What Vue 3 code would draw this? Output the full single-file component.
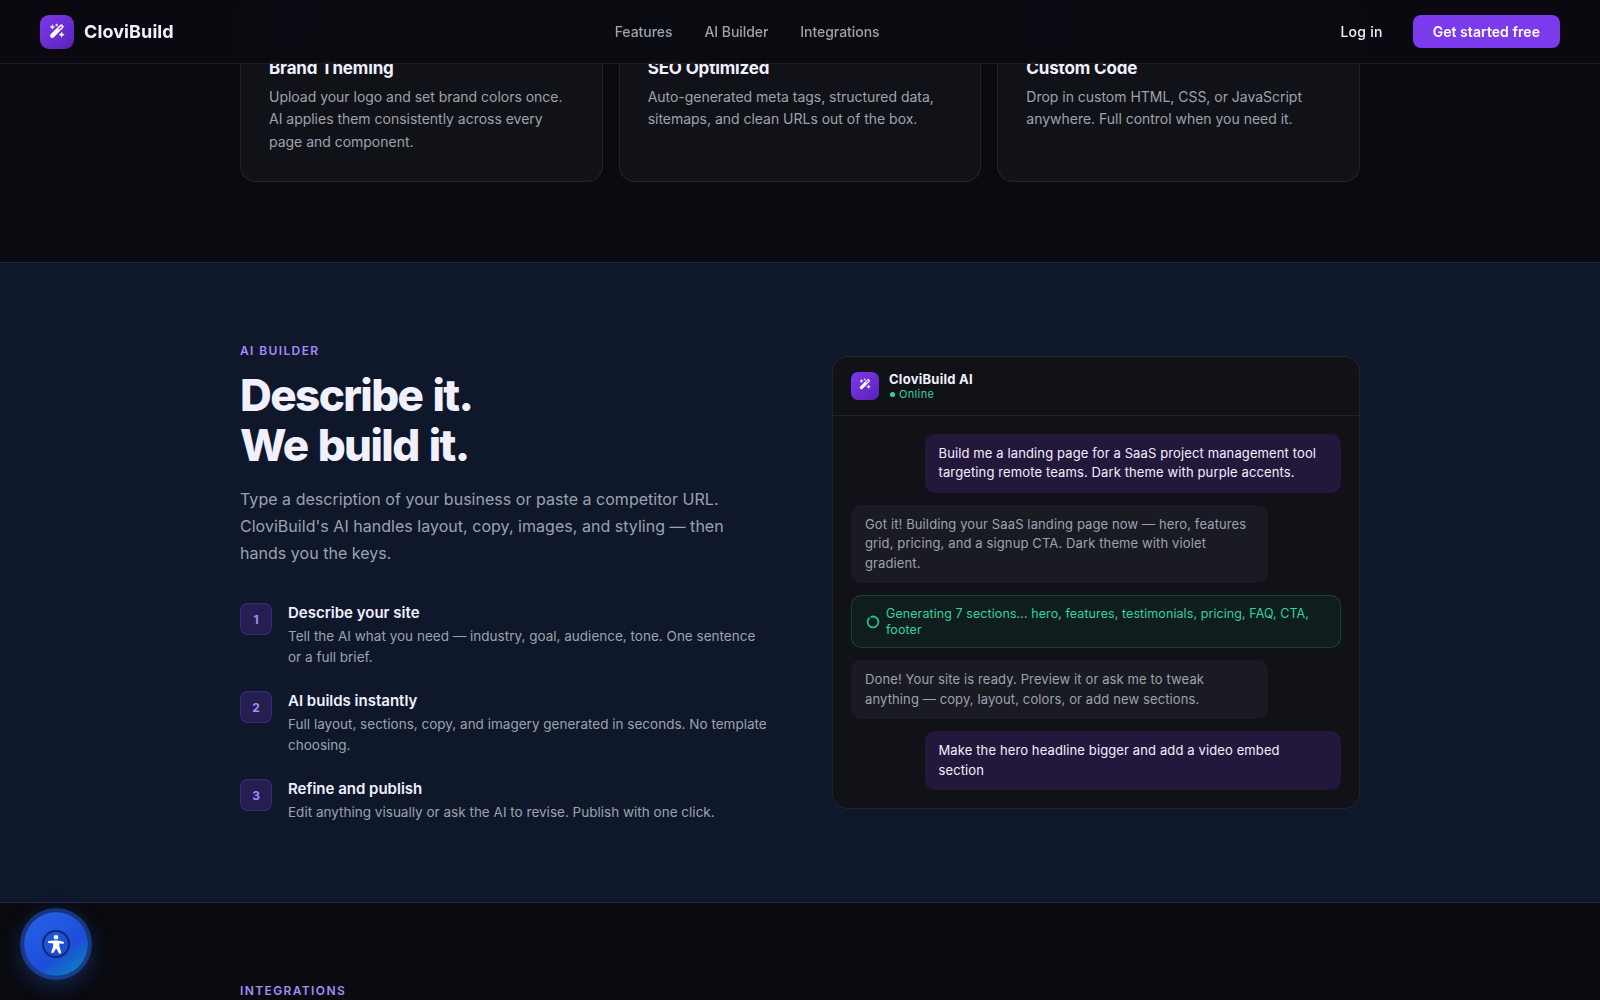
<template>
  <div class="page">
    <nav class="navbar">
      <a class="brand" href="#">
        <span class="brand-icon">
          <svg viewBox="0 0 24 24"><path :d="wandPath" /></svg>
        </span>
        <span class="brand-name">CloviBuild</span>
      </a>
      <div class="nav-links">
        <a v-for="link in links" :key="link" href="#">{{ link }}</a>
      </div>
      <div class="nav-actions">
        <a class="login" href="#">Log in</a>
        <a class="cta" href="#">Get started free</a>
      </div>
    </nav>

    <section class="features">
      <div v-for="feature in features" :key="feature.title" class="feature-card">
        <div class="feature-icon" :class="feature.tone"></div>
        <h3>{{ feature.title }}</h3>
        <p>{{ feature.text }}</p>
      </div>
    </section>

    <section class="builder">
      <div class="builder-inner">
        <div class="builder-copy">
          <div class="label">AI BUILDER</div>
          <h2>Describe it.<br />We build it.</h2>
          <p class="lead">
            Type a description of your business or paste a competitor URL. CloviBuild's AI handles layout, copy, images, and styling — then hands you the keys.
          </p>
          <div class="steps">
            <div v-for="(step, index) in steps" :key="step.title" class="step">
              <div class="step-number">{{ index + 1 }}</div>
              <div class="step-body">
                <div class="step-title">{{ step.title }}</div>
                <div class="step-text">{{ step.text }}</div>
              </div>
            </div>
          </div>
        </div>

        <div class="chat">
          <div class="chat-header">
            <span class="chat-avatar">
              <svg viewBox="0 0 24 24"><path :d="wandPath" /></svg>
            </span>
            <div>
              <div class="chat-name">CloviBuild AI</div>
              <div class="chat-online"><i class="dot"></i>Online</div>
            </div>
          </div>
          <div class="chat-body">
            <div v-for="message in messages" :key="message.text" class="message" :class="message.from">
              <svg v-if="message.from === 'status'" class="spinner" viewBox="0 0 14 14">
                <path d="M3.6 2.8A5.4 5.4 0 1 0 4.6 2.15" />
              </svg>
              <span>{{ message.text }}</span>
            </div>
          </div>
        </div>
      </div>
    </section>

    <section class="integrations">
      <div class="label">INTEGRATIONS</div>
    </section>

    <button class="a11y" aria-label="Accessibility">
      <svg viewBox="0 0 28 28">
        <circle class="ring" cx="14" cy="14" r="13" />
        <circle cx="14" cy="7.2" r="2.3" />
        <path d="M6.6 10.9 12 10.6h4l5.4 1.1c1 .2.9 2.1-.2 2.1l-3.9-.3.2 3.2 1.6 5.4c.4 1.6-1.7 2.2-2.3.8L14.6 19h-.9l-1.9 3.3c-.8 1.5-2.9.6-2.4-.9l1.7-4.6.2-3.4-4.5-.5c-1.2-.1-1.2-2-.2-2z" />
      </svg>
    </button>
  </div>
</template>

<script setup>
const wandPath =
  'M20.7 3.3a3 3 0 0 0-4.3 0L2.7 17a3 3 0 0 0 4.3 4.3L20.7 7.6a3 3 0 0 0 0-4.3zM19.3 6.2l-4 4-1.5-1.5 4-4a1.06 1.06 0 0 1 1.5 1.5zM5 2.5l1 2.5 2.5 1L6 7 5 9.5 4 7 1.5 6 4 5zM11.5 1l.6 1.4 1.4.6-1.4.6-.6 1.4-.6-1.4L9.5 3l1.4-.6zM19 13.5l1.2 2.8L23 17.5l-2.8 1.2L19 21.5l-1.2-2.8-2.8-1.2 2.8-1.2z'

const links = ['Features', 'AI Builder', 'Integrations']

const features = [
  {
    title: 'Brand Theming',
    text: 'Upload your logo and set brand colors once. AI applies them consistently across every page and component.',
    tone: 'indigo'
  },
  {
    title: 'SEO Optimized',
    text: 'Auto-generated meta tags, structured data, sitemaps, and clean URLs out of the box.',
    tone: 'teal'
  },
  {
    title: 'Custom Code',
    text: 'Drop in custom HTML, CSS, or JavaScript anywhere. Full control when you need it.',
    tone: 'violet'
  }
]

const steps = [
  {
    title: 'Describe your site',
    text: 'Tell the AI what you need — industry, goal, audience, tone. One sentence or a full brief.'
  },
  {
    title: 'AI builds instantly',
    text: 'Full layout, sections, copy, and imagery generated in seconds. No template choosing.'
  },
  {
    title: 'Refine and publish',
    text: 'Edit anything visually or ask the AI to revise. Publish with one click.'
  }
]

const messages = [
  {
    from: 'user',
    text: 'Build me a landing page for a SaaS project management tool targeting remote teams. Dark theme with purple accents.'
  },
  {
    from: 'bot',
    text: 'Got it! Building your SaaS landing page now — hero, features grid, pricing, and a signup CTA. Dark theme with violet gradient.'
  },
  {
    from: 'status',
    text: 'Generating 7 sections... hero, features, testimonials, pricing, FAQ, CTA, footer'
  },
  {
    from: 'bot',
    text: 'Done! Your site is ready. Preview it or ask me to tweak anything — copy, layout, colors, or add new sections.'
  },
  {
    from: 'user',
    text: 'Make the hero headline bigger and add a video embed section'
  }
]
</script>

<style>
body {
  margin: 0;
  background: #0a0a0f;
}
</style>

<style scoped>
.page {
  height: 1000px;
  overflow: hidden;
  background: #0a0a0f;
  color: #f1f0ff;
  font-family: Inter, sans-serif;
}

a {
  color: inherit;
  text-decoration: none;
}

h2,
h3,
p {
  margin: 0;
}

.navbar {
  position: fixed;
  inset: 0 0 auto;
  z-index: 10;
  box-sizing: border-box;
  height: 64px;
  padding: 0 40px;
  display: flex;
  justify-content: space-between;
  align-items: center;
  background: rgba(10, 10, 15, 0.92);
  backdrop-filter: blur(12px);
  border-bottom: 1px solid rgba(255, 255, 255, 0.08);
}

.brand {
  display: flex;
  align-items: center;
  gap: 10px;
}

.brand-icon,
.chat-avatar {
  display: flex;
  align-items: center;
  justify-content: center;
  background: linear-gradient(135deg, #7c3aed, #5b21b6);
}

.brand-icon {
  width: 34px;
  height: 34px;
  border-radius: 9px;
}

.brand-icon svg,
.chat-avatar svg {
  fill: #fff;
  stroke: #fff;
  stroke-width: 0.6;
}

.brand-icon svg {
  width: 16px;
  height: 16px;
  margin-bottom: 2px;
}

.brand-name {
  font-size: 18px;
  font-weight: 700;
  letter-spacing: 0.1px;
}

.nav-links {
  display: flex;
  gap: 32px;
  font-size: 14px;
  font-weight: 500;
  letter-spacing: -0.05px;
  color: #9ca3af;
}

.nav-actions {
  display: flex;
  align-items: center;
  gap: 10px;
  font-size: 14px;
}

.login {
  padding: 8px 20px;
  font-weight: 500;
  letter-spacing: 0.25px;
}

.cta {
  padding: 8px 20px;
  border-radius: 8px;
  background: #7c3aed;
  color: #fff;
  font-weight: 600;
  line-height: 17px;
  letter-spacing: 0.06px;
}

.features {
  width: 1120px;
  margin: -31px auto 80px;
  display: grid;
  grid-template-columns: repeat(3, 1fr);
  gap: 16px;
}

.feature-card {
  box-sizing: border-box;
  height: 213px;
  padding: 28px;
  border: 1px solid rgba(255, 255, 255, 0.08);
  border-top: 0;
  border-radius: 0 0 16px 16px;
  background: #111217;
}

.feature-icon {
  width: 44px;
  height: 44px;
  margin-bottom: 17px;
  border-radius: 10px;
}

.indigo {
  background: #1d2350;
}

.teal {
  background: #10303a;
}

.violet {
  background: #2a1650;
}

.feature-card h3 {
  margin-bottom: 7px;
  font-size: 17px;
  line-height: 21px;
  font-weight: 700;
  letter-spacing: -0.15px;
}

.feature-card p {
  font-size: 14px;
  line-height: 22.4px;
  letter-spacing: -0.02px;
  color: #9ca3af;
}

.builder {
  padding: 80px 0 78.5px;
  border-top: 1px solid #1e293b;
  border-bottom: 1px solid #1e293b;
  background: #0f172a;
}

.builder-inner {
  width: 1120px;
  margin: 0 auto;
  display: grid;
  grid-template-columns: 1fr 1fr;
  gap: 64px;
  align-items: center;
}

.label {
  margin-bottom: 12px;
  font-size: 12px;
  line-height: 15px;
  font-weight: 600;
  letter-spacing: 1.38px;
  color: #a78bfa;
}

h2 {
  margin-bottom: 16px;
  font-size: 44px;
  line-height: 50px;
  font-weight: 800;
  letter-spacing: -1.6px;
  word-spacing: 2px;
}

.lead {
  margin-bottom: 35.4px;
  font-size: 16px;
  line-height: 27.2px;
  letter-spacing: 0.03px;
  color: #9ca3af;
}

.steps {
  display: flex;
  flex-direction: column;
  gap: 23px;
}

.step {
  display: flex;
  gap: 16px;
}

.step-number {
  box-sizing: border-box;
  flex: none;
  width: 32px;
  height: 32px;
  display: flex;
  align-items: center;
  justify-content: center;
  border: 1px solid rgba(124, 58, 237, 0.3);
  border-radius: 8px;
  background: rgba(124, 58, 237, 0.2);
  color: #a78bfa;
  font-size: 12px;
  font-weight: 700;
}

.step-body {
  padding-top: 1.2px;
}

.step-title {
  margin-bottom: 4px;
  font-size: 15px;
  line-height: 18px;
  font-weight: 600;
}

.step-text {
  font-size: 13.5px;
  line-height: 1.55;
  letter-spacing: 0.01px;
  color: #9ca3af;
}

.chat {
  overflow: hidden;
  margin-bottom: 0.8px;
  border: 1px solid rgba(255, 255, 255, 0.08);
  border-radius: 16px;
  background: #111217;
}

.chat-header {
  display: flex;
  align-items: center;
  gap: 10px;
  height: 58px;
  padding: 0 18px;
  border-bottom: 1px solid rgba(255, 255, 255, 0.08);
}

.chat-avatar {
  width: 28px;
  height: 28px;
  border-radius: 7px;
}

.chat-avatar svg {
  width: 12px;
  height: 12px;
  margin-bottom: 3px;
}

.chat-name {
  font-size: 13px;
  line-height: 16px;
  font-weight: 700;
  letter-spacing: 0.25px;
}

.chat-online {
  display: flex;
  align-items: center;
  gap: 4px;
  font-size: 11px;
  line-height: 14px;
  letter-spacing: 0.35px;
  color: #34d399;
}

.dot {
  width: 5px;
  height: 5px;
  margin: 1px 0 0 1px;
  border-radius: 50%;
  background: #34d399;
}

.chat-body {
  display: flex;
  flex-direction: column;
  gap: 12px;
  padding: 18px 18px 18.4px;
}

.message {
  box-sizing: border-box;
  max-width: 85%;
  padding: 10px 14px;
  border-radius: 10px;
  font-size: 13px;
  line-height: 19.5px;
  letter-spacing: 0.12px;
}

.user {
  align-self: flex-end;
  background: #24173c;
  color: #f1f0ff;
}

.bot {
  align-self: flex-start;
  background: #1a1a23;
  color: #9ca3af;
}

.status {
  display: flex;
  align-items: center;
  gap: 6px;
  max-width: none;
  border: 1px solid rgba(16, 185, 129, 0.25);
  background: rgba(16, 185, 129, 0.07);
  color: #34d399;
  font-size: 12.5px;
  line-height: 15.3px;
  letter-spacing: 0.08px;
}

.spinner {
  flex: none;
  width: 14px;
  height: 14px;
  fill: none;
  stroke: currentColor;
  stroke-width: 1.8;
  opacity: 0.85;
}

.integrations {
  width: 1120px;
  margin: 0 auto;
  padding: 80px 0;
}

.a11y {
  position: fixed;
  left: 24px;
  bottom: 24px;
  width: 64px;
  height: 64px;
  padding: 0;
  display: flex;
  align-items: center;
  justify-content: center;
  border: 0;
  border-radius: 50%;
  background: linear-gradient(145deg, #2563eb 0%, #1d4ed8 62%, #0891b2 100%);
  box-shadow: 0 0 0 4px rgba(37, 99, 235, 0.45), 0 6px 24px rgba(37, 99, 235, 0.45);
}

.a11y svg {
  width: 28px;
  height: 28px;
  fill: #fff;
}

.a11y .ring {
  fill: none;
  stroke: #12296b;
  stroke-width: 2;
}
</style>
